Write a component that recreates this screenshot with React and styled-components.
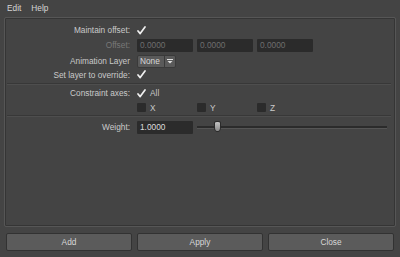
import React from "react";
import styled, { createGlobalStyle } from "styled-components";

const Global = createGlobalStyle`
  html, body { margin: 0; padding: 0; background: #444444; }
  body { font-family: "Liberation Sans", Arial, sans-serif; font-size: 8.3px; color: #c8c8c8; }
  * { box-sizing: border-box; }
`;

const Window = styled.div`
  width: 400px;
  height: 257px;
  background: #444444;
  display: flex;
  flex-direction: column;
  overflow: hidden;
`;

const MenuBar = styled.div`
  height: 17px;
  display: flex;
  align-items: center;
  gap: 10px;
  padding: 0 0 1px 7px;
  color: #d6d6d6;
`;

const MenuItem = styled.span``;

const Panel = styled.div`
  margin: 0 4px;
  height: 210px;
  border: 1px solid #565656;
  border-radius: 2px;
  box-shadow: inset 0 0 0 1px #353535;
  padding: 5px 4px 0 2px;
  display: flex;
  flex-direction: column;
`;

const Row = styled.div`
  display: grid;
  grid-template-columns: 123px 1fr;
  column-gap: 7px;
  align-items: center;
  height: ${(p) => p.$h || 14}px;
  margin-top: ${(p) => p.$mt || 0}px;
`;

const Label = styled.div`
  text-align: right;
  white-space: nowrap;
  color: ${(p) => (p.$disabled ? "#787878" : "#cacaca")};
`;

const Controls = styled.div`
  display: flex;
  align-items: center;
  gap: ${(p) => p.$gap ?? 4}px;
`;

const Field = styled.div`
  width: 56px;
  height: 13px;
  background: #2b2b2b;
  border-radius: 1px;
  padding: 0 3px;
  display: flex;
  align-items: center;
  color: ${(p) => (p.$disabled ? "#6e6e6e" : "#dcdcdc")};
`;

const Separator = styled.div`
  height: 2px;
  margin: ${(p) => p.$m || "0"};
  border-top: 1px solid #383838;
  border-bottom: 1px solid #4e4e4e;
`;

const Dropdown = styled.div`
  display: flex;
  height: 13px;
  border: 1px solid #3a3a3a;
  border-radius: 2px;
  background: #5a5a5a;
  color: #d8d8d8;
`;

const DropText = styled.div`
  width: 27px;
  padding-left: 2px;
  display: flex;
  align-items: center;
  border-right: 1px solid #3a3a3a;
`;

const DropArrow = styled.div`
  width: 10px;
  display: flex;
  align-items: center;
  justify-content: center;
`;

const CheckWrap = styled.div`
  display: flex;
  align-items: center;
  gap: 4px;
  width: ${(p) => (p.$w ? `${p.$w}px` : "auto")};
  color: #cacaca;
`;

const Box = styled.div`
  width: 9px;
  height: 9px;
  background: #2b2b2b;
  border-radius: 1px;
`;

const SliderTrack = styled.div`
  position: relative;
  flex: 1;
  height: 12px;
  margin-right: 4px;
  display: flex;
  align-items: center;
  &::before {
    content: "";
    flex: 1;
    height: 2px;
    background: #2b2b2b;
    border-bottom: 1px solid #555;
  }
`;

const Thumb = styled.div`
  position: absolute;
  left: 17px;
  top: 0;
  width: 7px;
  height: 11px;
  background: linear-gradient(#c4c4c4, #8a8a8a);
  border: 1px solid #2a2a2a;
  border-radius: 3px 3px 3px 3px / 2px 2px 5px 5px;
`;

const Spacer = styled.div`
  flex: 1;
`;

const ButtonRow = styled.div`
  display: flex;
  gap: 5px;
  padding: 6px;
`;

const Button = styled.button`
  flex: 1;
  height: 18px;
  background: #5b5b5b;
  border: 1px solid #323232;
  border-radius: 2px;
  color: #d8d8d8;
  font-family: "Liberation Sans", Arial, sans-serif;
  font-size: 8.3px;
  padding: 0;
`;

const Check = () => (
  <svg width="9" height="9" viewBox="0 0 9 9">
    <path d="M1 5 L3.2 7.6 L8 1" stroke="#f0f0f0" strokeWidth="1.7" fill="none" strokeLinecap="round" strokeLinejoin="round" />
  </svg>
);

const Arrow = () => (
  <svg width="6" height="5" viewBox="0 0 6 5">
    <rect x="0" y="0" width="6" height="1" fill="#e0e0e0" />
    <path d="M0.5 2 L5.5 2 L3 4.5 Z" fill="#e0e0e0" />
  </svg>
);

export default function App() {
  return (
    <Window>
      <Global />
      <MenuBar>
        <MenuItem>Edit</MenuItem>
        <MenuItem>Help</MenuItem>
      </MenuBar>
      <Panel>
        <Row>
          <Label>Maintain offset:</Label>
          <Controls><Check /></Controls>
        </Row>
        <Row $mt={1}>
          <Label $disabled>Offset:</Label>
          <Controls>
            <Field $disabled>0.0000</Field>
            <Field $disabled>0.0000</Field>
            <Field $disabled>0.0000</Field>
          </Controls>
        </Row>
        <Row $mt={2}>
          <Label>Animation Layer</Label>
          <Controls>
            <Dropdown>
              <DropText>None</DropText>
              <DropArrow><Arrow /></DropArrow>
            </Dropdown>
          </Controls>
        </Row>
        <Row $h={13}>
          <Label>Set layer to override:</Label>
          <Controls><Check /></Controls>
        </Row>
        <Separator $m="2px 0 0 0" />
        <Row $mt={1}>
          <Label>Constraint axes:</Label>
          <Controls>
            <CheckWrap><Check /><span>All</span></CheckWrap>
          </Controls>
        </Row>
        <Row $mt={1} $h={13}>
          <Label />
          <Controls $gap={0}>
            <CheckWrap $w={60}><Box /><span>X</span></CheckWrap>
            <CheckWrap $w={60}><Box /><span>Y</span></CheckWrap>
            <CheckWrap><Box /><span>Z</span></CheckWrap>
          </Controls>
        </Row>
        <Separator $m="1px 0 0 0" />
        <Row $mt={3}>
          <Label>Weight:</Label>
          <Controls>
            <Field>1.0000</Field>
            <SliderTrack><Thumb /></SliderTrack>
          </Controls>
        </Row>
        <Spacer />
      </Panel>
      <ButtonRow>
        <Button>Add</Button>
        <Button>Apply</Button>
        <Button>Close</Button>
      </ButtonRow>
    </Window>
  );
}
